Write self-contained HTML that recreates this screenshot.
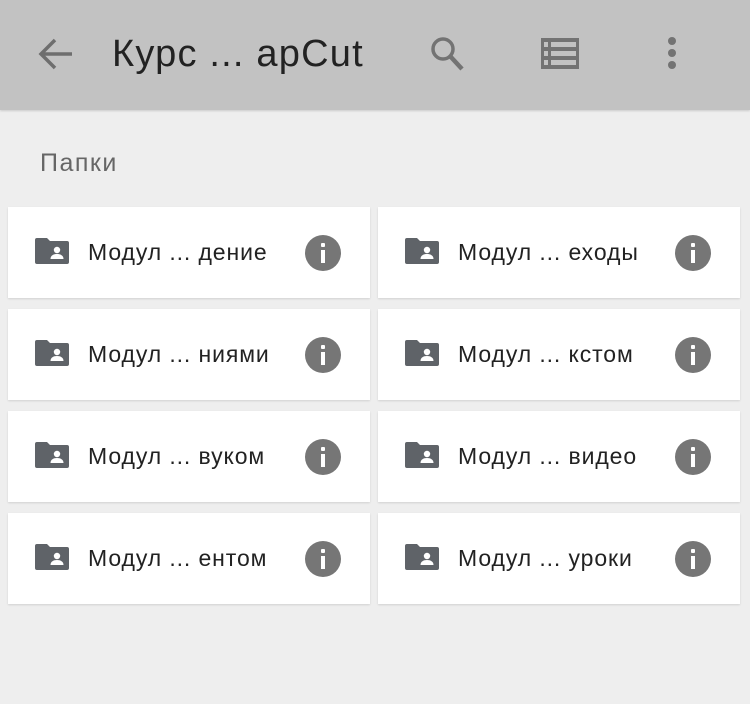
<!DOCTYPE html>
<html><head><meta charset="utf-8"><style>
body{margin:0;width:750px;height:704px;background:#eeeeee;font-family:"Liberation Sans",sans-serif;position:relative;overflow:hidden}
.hdr{position:absolute;left:0;top:0;width:750px;height:110px;background:#c2c2c2;box-shadow:0 1px 2px rgba(0,0,0,.15)}
.title{position:absolute;left:112px;top:33px;font-size:38px;color:#222;letter-spacing:1.2px}
.lbl{position:absolute;left:40px;top:149px;font-size:25px;color:#666;letter-spacing:1.5px}
.card{position:absolute;width:362px;height:91px;background:#fff;box-shadow:0 1px 2px rgba(0,0,0,.12)}
.card svg.f{position:absolute;left:27px;top:31px}
.card .t{position:absolute;left:80px;top:32px;font-size:23px;color:#222;letter-spacing:0.9px}
.card .i{position:absolute;left:297px;top:28px;width:36px;height:36px;border-radius:50%;background:#767676}
.card .i:before{content:"";position:absolute;left:16px;top:8px;width:4px;height:4px;background:#fff;border-radius:1px}
.card .i:after{content:"";position:absolute;left:16px;top:15px;width:4px;height:13px;background:#fff}
</style></head><body>
<div class="hdr">
<svg style="position:absolute;left:38px;top:37px" width="36" height="34" viewBox="0 0 36 34"><path d="M34 17H4M17 3L3 17l14 14" stroke="#6e6e6e" stroke-width="3.5" fill="none"/></svg>
<div class="title">Курс ... apCut</div>
<svg style="position:absolute;left:429px;top:36px" width="38" height="36" viewBox="0 0 38 36"><circle cx="14" cy="13" r="10" stroke="#737373" stroke-width="3.5" fill="none"/><path d="M21 20l12 13" stroke="#737373" stroke-width="4.5"/></svg>
<svg style="position:absolute;left:541px;top:38px" width="38" height="31" viewBox="0 0 38 31"><rect x="0" y="0" width="38" height="31" fill="#737373"/><g fill="#c2c2c2"><rect x="3" y="4" width="4" height="5"/><rect x="10" y="4" width="25" height="5"/><rect x="3" y="13" width="4" height="5"/><rect x="10" y="13" width="25" height="5"/><rect x="3" y="22" width="4" height="5"/><rect x="10" y="22" width="25" height="5"/></g></svg>
<svg style="position:absolute;left:665px;top:36px" width="14" height="34"><circle cx="7" cy="5" r="4" fill="#737373"/><circle cx="7" cy="17" r="4" fill="#737373"/><circle cx="7" cy="29" r="4" fill="#737373"/></svg>
</div>
<div class="lbl">Папки</div>
<div class="card" style="left:8px;top:207px"><svg class="f" width="34" height="26" viewBox="0 0 34 26"><path d="M2 0h10l3 3h17a2 2 0 0 1 2 2v19a2 2 0 0 1-2 2H2a2 2 0 0 1-2-2V2a2 2 0 0 1 2-2z" fill="#5f6368"/><circle cx="22" cy="12" r="3.2" fill="#fff"/><path d="M15.5 21c0-3.5 3-5 6.5-5s6.5 1.5 6.5 5z" fill="#fff"/></svg><div class="t">Модул ... дение</div><div class="i"></div></div>
<div class="card" style="left:378px;top:207px"><svg class="f" width="34" height="26" viewBox="0 0 34 26"><path d="M2 0h10l3 3h17a2 2 0 0 1 2 2v19a2 2 0 0 1-2 2H2a2 2 0 0 1-2-2V2a2 2 0 0 1 2-2z" fill="#5f6368"/><circle cx="22" cy="12" r="3.2" fill="#fff"/><path d="M15.5 21c0-3.5 3-5 6.5-5s6.5 1.5 6.5 5z" fill="#fff"/></svg><div class="t">Модул ... еходы</div><div class="i"></div></div>
<div class="card" style="left:8px;top:309px"><svg class="f" width="34" height="26" viewBox="0 0 34 26"><path d="M2 0h10l3 3h17a2 2 0 0 1 2 2v19a2 2 0 0 1-2 2H2a2 2 0 0 1-2-2V2a2 2 0 0 1 2-2z" fill="#5f6368"/><circle cx="22" cy="12" r="3.2" fill="#fff"/><path d="M15.5 21c0-3.5 3-5 6.5-5s6.5 1.5 6.5 5z" fill="#fff"/></svg><div class="t">Модул ... ниями</div><div class="i"></div></div>
<div class="card" style="left:378px;top:309px"><svg class="f" width="34" height="26" viewBox="0 0 34 26"><path d="M2 0h10l3 3h17a2 2 0 0 1 2 2v19a2 2 0 0 1-2 2H2a2 2 0 0 1-2-2V2a2 2 0 0 1 2-2z" fill="#5f6368"/><circle cx="22" cy="12" r="3.2" fill="#fff"/><path d="M15.5 21c0-3.5 3-5 6.5-5s6.5 1.5 6.5 5z" fill="#fff"/></svg><div class="t">Модул ... кстом</div><div class="i"></div></div>
<div class="card" style="left:8px;top:411px"><svg class="f" width="34" height="26" viewBox="0 0 34 26"><path d="M2 0h10l3 3h17a2 2 0 0 1 2 2v19a2 2 0 0 1-2 2H2a2 2 0 0 1-2-2V2a2 2 0 0 1 2-2z" fill="#5f6368"/><circle cx="22" cy="12" r="3.2" fill="#fff"/><path d="M15.5 21c0-3.5 3-5 6.5-5s6.5 1.5 6.5 5z" fill="#fff"/></svg><div class="t">Модул ... вуком</div><div class="i"></div></div>
<div class="card" style="left:378px;top:411px"><svg class="f" width="34" height="26" viewBox="0 0 34 26"><path d="M2 0h10l3 3h17a2 2 0 0 1 2 2v19a2 2 0 0 1-2 2H2a2 2 0 0 1-2-2V2a2 2 0 0 1 2-2z" fill="#5f6368"/><circle cx="22" cy="12" r="3.2" fill="#fff"/><path d="M15.5 21c0-3.5 3-5 6.5-5s6.5 1.5 6.5 5z" fill="#fff"/></svg><div class="t">Модул ... видео</div><div class="i"></div></div>
<div class="card" style="left:8px;top:513px"><svg class="f" width="34" height="26" viewBox="0 0 34 26"><path d="M2 0h10l3 3h17a2 2 0 0 1 2 2v19a2 2 0 0 1-2 2H2a2 2 0 0 1-2-2V2a2 2 0 0 1 2-2z" fill="#5f6368"/><circle cx="22" cy="12" r="3.2" fill="#fff"/><path d="M15.5 21c0-3.5 3-5 6.5-5s6.5 1.5 6.5 5z" fill="#fff"/></svg><div class="t">Модул ... ентом</div><div class="i"></div></div>
<div class="card" style="left:378px;top:513px"><svg class="f" width="34" height="26" viewBox="0 0 34 26"><path d="M2 0h10l3 3h17a2 2 0 0 1 2 2v19a2 2 0 0 1-2 2H2a2 2 0 0 1-2-2V2a2 2 0 0 1 2-2z" fill="#5f6368"/><circle cx="22" cy="12" r="3.2" fill="#fff"/><path d="M15.5 21c0-3.5 3-5 6.5-5s6.5 1.5 6.5 5z" fill="#fff"/></svg><div class="t">Модул ... уроки</div><div class="i"></div></div>
</body></html>
